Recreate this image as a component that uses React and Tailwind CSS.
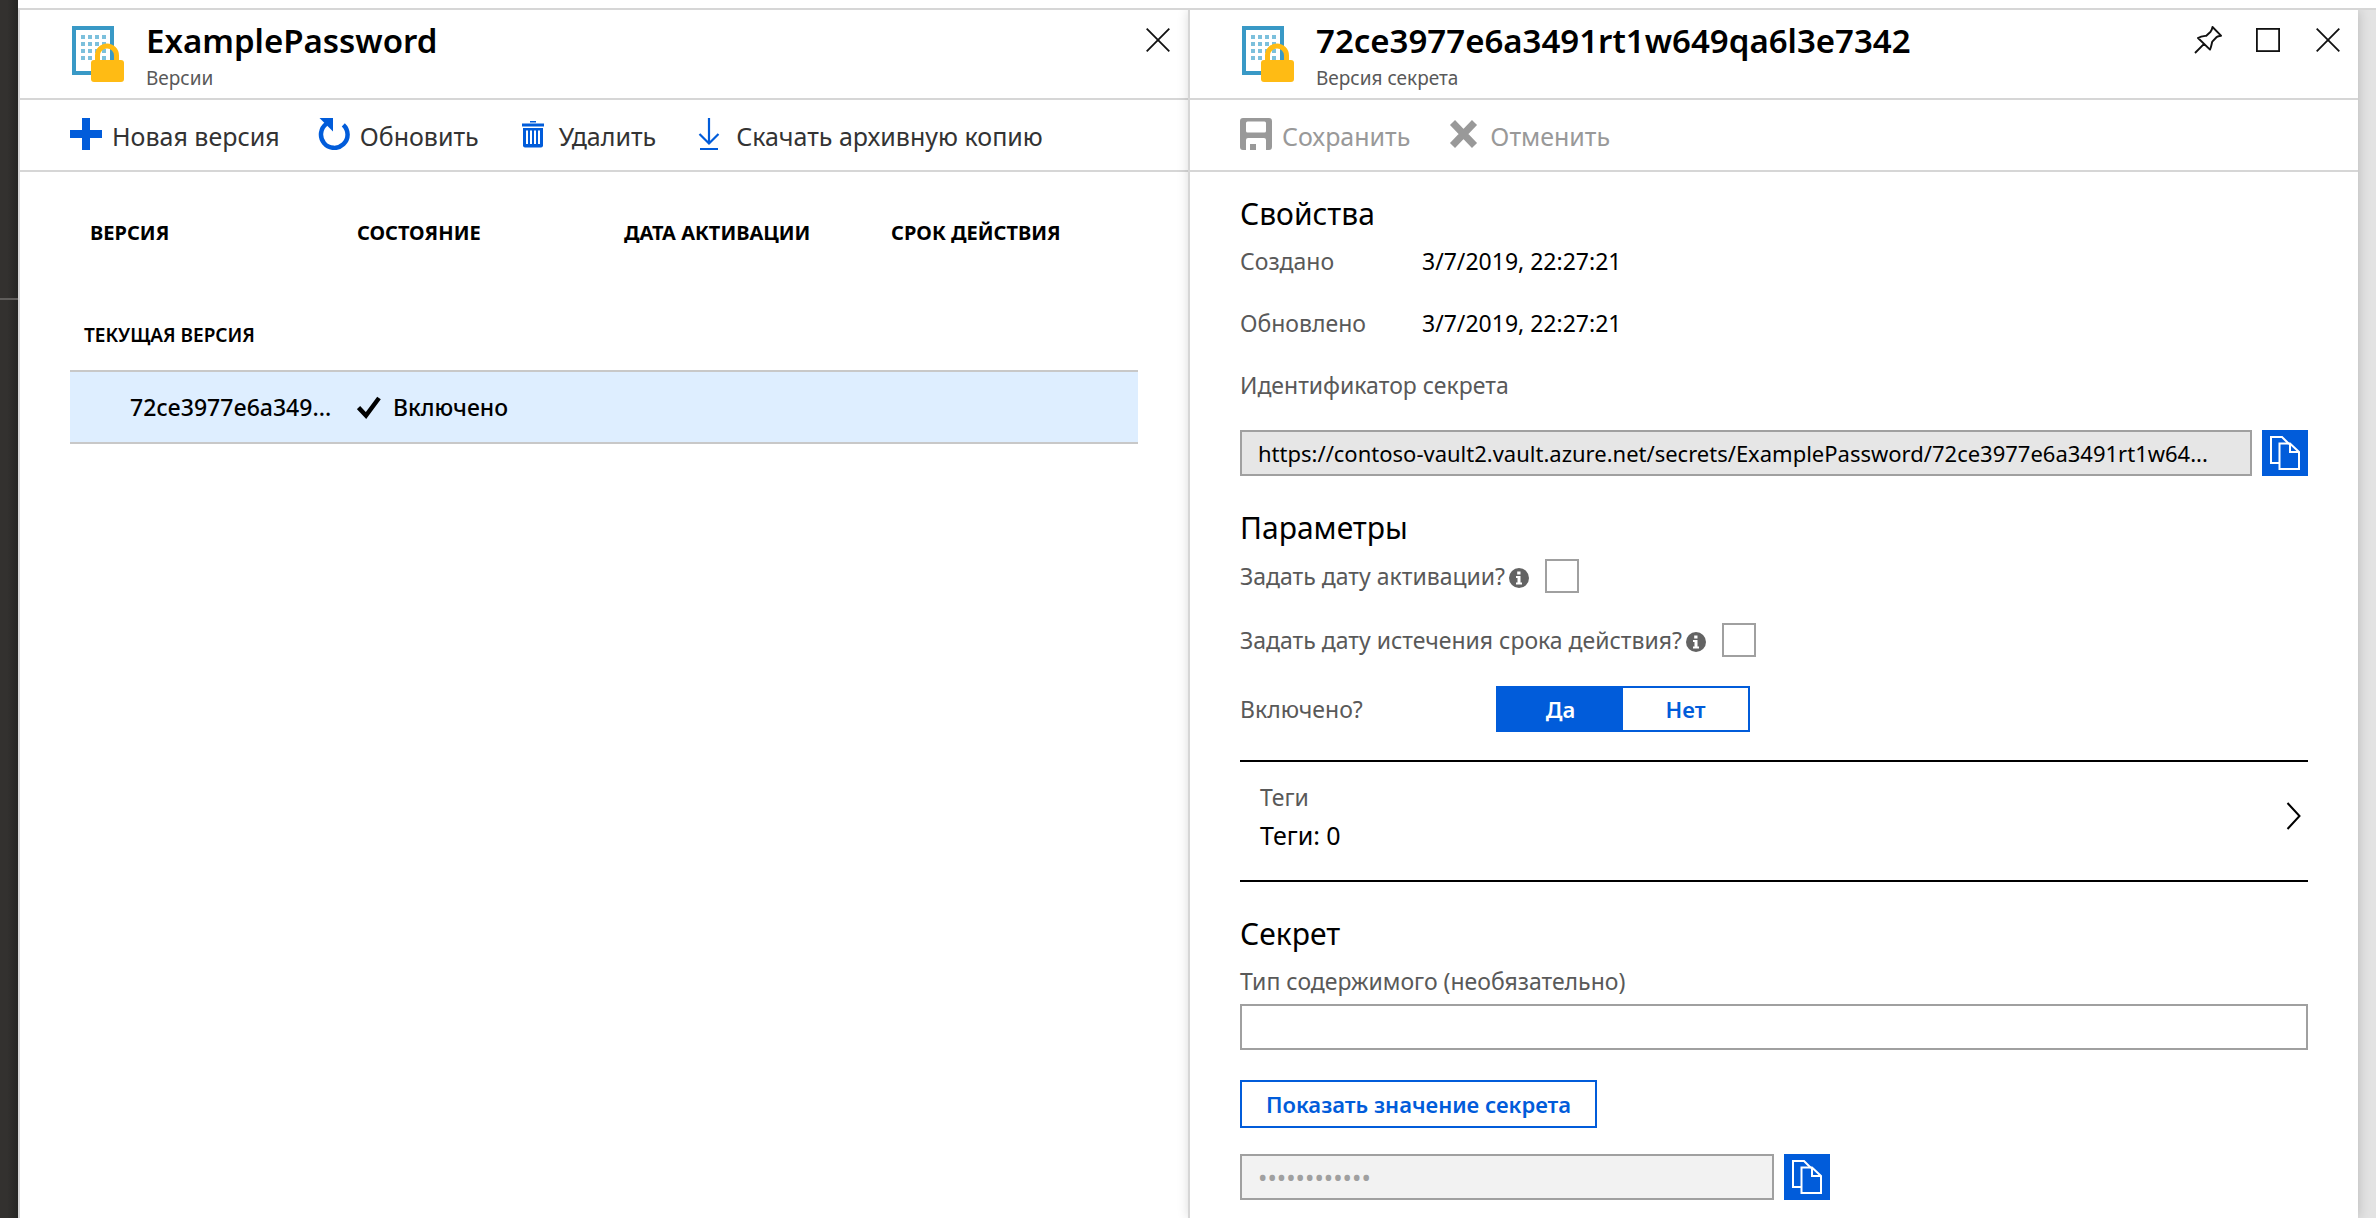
function SecretIcon() {
  const dots = [];
  for (let r = 0; r < 4; r++) {
    for (let c = 0; c < 4; c++) {
      dots.push(<rect key={r + "-" + c} x={11 + c * 7} y={11 + r * 7} width="4" height="4" fill="#7cc0dc" />);
    }
  }
  return (
    <svg viewBox="0 0 56 60" className="mt-1.5 h-[60px] w-14 shrink-0" aria-hidden="true">
      <rect x="4" y="4" width="38" height="45" fill="#fff" stroke="#3999c6" strokeWidth="4" />
      {dots}
      <path d="M27.5 38V31.5a9.5 9.500 0 0 1 19 0V38" fill="none" stroke="#ffbb14" strokeWidth="5" />
      <rect x="21" y="36" width="33" height="22" rx="3" fill="#ffbb14" />
    </svg>
  );
}

function PlusIcon() {
  return (
    <svg viewBox="0 0 32 32" className="size-8 shrink-0" aria-hidden="true">
      <path d="M12 0h8v12h12v8H20v12h-8V20H0v-8h12z" fill="#015cda" />
    </svg>
  );
}

function RefreshIcon() {
  return (
    <svg viewBox="0 0 32 32" className="size-8 shrink-0" aria-hidden="true">
      <path d="M25.300 6.800A13.300 13.300 0 1 1 8.500 5.800" fill="none" stroke="#015cda" strokeWidth="4.500" />
      <path d="M1.500 0H15v13.500z" fill="#015cda" />
    </svg>
  );
}

function TrashIcon() {
  return (
    <svg viewBox="0 0 32 32" className="size-8 shrink-0" aria-hidden="true">
      <path d="M13 3h6v1.500h-6zM5 5.500h22v3H5z" fill="#015cda" />
      <path d="M6 10h20v17.500a2 2 0 0 1-2 2H8a2 2 0 0 1-2-2z" fill="#015cda" />
      <path d="M10 12.500V26M14 12.500V26M18 12.500V26M22 12.500V26" stroke="#fff" strokeWidth="2" />
    </svg>
  );
}

function DownloadIcon() {
  return (
    <svg viewBox="0 0 32 32" className="size-8 shrink-0" aria-hidden="true">
      <path d="M15 0v25M5.500 16l9.500 9.500L24.500 16M6 31h18" fill="none" stroke="#015cda" strokeWidth="2.200" />
    </svg>
  );
}

function SaveIcon() {
  return (
    <svg viewBox="0 0 32 32" className="size-8 shrink-0" aria-hidden="true">
      <path
        fillRule="evenodd"
        fill="#999"
        d="M3 0h26a3 3 0 0 1 3 3v26a3 3 0 0 1-3 3h-3V22a2 2 0 0 0-2-2H8a2 2 0 0 0-2 2v10H3a3 3 0 0 1-3-3V3a3 3 0 0 1 3-3zM7.500 3.500a1.500 1.500 0 0 0-1.500 1.500v8A1.500 1.500 0 0 0 7.500 14.500h17a1.500 1.500 0 0 0 1.500-1.500V5a1.500 1.500 0 0 0-1.500-1.500zM10 26h6v6h-6z"
      />
    </svg>
  );
}

function CancelIcon() {
  return (
    <svg viewBox="0 0 32 32" className="size-8 shrink-0" aria-hidden="true">
      <path d="M4.500 4.500l22 23M26.500 4.500l-22 23" stroke="#999" strokeWidth="7" />
    </svg>
  );
}

function CloseIcon() {
  return (
    <svg viewBox="0 0 24 24" className="size-6" aria-hidden="true">
      <path d="M.7.7l22.600 22.600M23.300.7L.7 23.300" stroke="#111" strokeWidth="1.800" />
    </svg>
  );
}

function SquareIcon() {
  return (
    <svg viewBox="0 0 24 24" className="size-6" aria-hidden="true">
      <rect x=".9" y=".9" width="22.200" height="22.200" fill="none" stroke="#111" strokeWidth="1.800" />
    </svg>
  );
}

function PinIcon() {
  return (
    <svg viewBox="0 0 28 28" className="size-7" aria-hidden="true">
      <path
        d="M1 27l9.300-9.300M18.500 1l8.500 8.700c-2.300.2-3.500.6-4.300 1.300l-4.400 4.600c-.6 1.300-.6 4-2.300 8L4 12c3.300-2 6-2 8.300-2.300l4.300-4c.9-1 1.500-2.500 1.900-4.700z"
        fill="none"
        stroke="#111"
        strokeWidth="1.900"
        strokeLinejoin="round"
      />
    </svg>
  );
}

function CheckIcon() {
  return (
    <svg viewBox="0 0 24 24" className="size-6 shrink-0" aria-hidden="true">
      <path d="M1.500 12.500l7.500 8L22 3" fill="none" stroke="#000" strokeWidth="4.500" />
    </svg>
  );
}

function InfoIcon() {
  return (
    <svg viewBox="0 0 20 20" className="mt-1 size-5 shrink-0" aria-hidden="true">
      <circle cx="10" cy="10" r="10" fill="#636363" />
      <path d="M8.200 3.500h3.300v3H8.200zM7 8h4.500v6.500H13v2H7v-2h1.500V10H7z" fill="#fff" />
    </svg>
  );
}

function CopyButton({ label }) {
  return (
    <button type="button" aria-label={label} className="flex size-[46px] shrink-0 items-center justify-center bg-[#015cda]">
      <svg viewBox="0 0 30 34" className="h-[34px] w-[30px]" fill="none" stroke="#fff" strokeWidth="2" aria-hidden="true">
        <path d="M9 27H1V1h11l7 7" />
        <path d="M9.500 7.500H20L29 16v17H9.500z" />
        <path d="M20 7.500V16h9" />
      </svg>
    </button>
  );
}

function Header({ title, subtitle, children }) {
  return (
    <header className="flex h-[90px] items-start gap-5 border-b-2 border-[#d6d6d6] pt-2 pr-[18px] pl-[50px]">
      <SecretIcon />
      <div className="min-w-0 flex-1">
        <h1 className="truncate text-[33px] leading-[46px] font-semibold">{title}</h1>
        <p className="text-[19px] leading-7 text-[#595959]">{subtitle}</p>
      </div>
      <div className="flex h-11 items-center gap-9">{children}</div>
    </header>
  );
}

function Tool({ icon, children, disabled }) {
  return (
    <button
      type="button"
      disabled={disabled}
      className="flex items-center gap-2.5 text-[25px] leading-9 text-[#333] disabled:text-[#999]"
    >
      {icon}
      <span className="mt-1">{children}</span>
    </button>
  );
}

function Toolbar({ children }) {
  return (
    <div role="toolbar" className="flex h-[72px] items-center gap-[38px] border-b-2 border-[#d6d6d6] px-[50px] pb-0.5">
      {children}
    </div>
  );
}

function DateOption({ id, children }) {
  return (
    <div className="flex h-16 items-center">
      <label htmlFor={id} className="text-[#595959]">{children}</label>
      <span className="ml-1 flex"><InfoIcon /></span>
      <input id={id} type="checkbox" className="ml-4 size-[34px] appearance-none border-2 border-[#a0a0a0] bg-white" />
    </div>
  );
}

function VersionsPanel() {
  const headings = ["ВЕРСИЯ", "СОСТОЯНИЕ", "ДАТА АКТИВАЦИИ", "СРОК ДЕЙСТВИЯ"];
  const cell = "h-[74px] border-y-2 border-[#c8c8c8] bg-[#deeeff]";
  return (
    <section className="min-w-0 flex-1 bg-white">
      <Header title="ExamplePassword" subtitle="Версии">
        <button type="button" aria-label="Закрыть"><CloseIcon /></button>
      </Header>
      <Toolbar>
        <Tool icon={<PlusIcon />}>Новая версия</Tool>
        <Tool icon={<RefreshIcon />}>Обновить</Tool>
        <Tool icon={<TrashIcon />}>Удалить</Tool>
        <Tool icon={<DownloadIcon />}>Скачать архивную копию</Tool>
      </Toolbar>
      <div className="px-[50px]">
        <table className="w-full table-fixed border-separate border-spacing-0 text-left">
          <thead>
            <tr>
              {headings.map((h) => (
                <th key={h} scope="col" className="h-[122px] pl-5 text-[20px] font-bold whitespace-nowrap">{h}</th>
              ))}
            </tr>
          </thead>
          <tbody>
            <tr>
              <th colSpan={4} scope="colgroup" className="h-[76px] pt-1.5 pl-3.5 text-[19px] font-semibold">ТЕКУЩАЯ ВЕРСИЯ</th>
            </tr>
            <tr className="font-medium">
              <td className={cell + " pl-[60px] whitespace-nowrap"}>72ce3977e6a349...</td>
              <td className={cell + " pl-5"}>
                <span className="flex items-center gap-3"><CheckIcon />Включено</span>
              </td>
              <td className={cell} />
              <td className={cell} />
            </tr>
          </tbody>
        </table>
      </div>
    </section>
  );
}

function SecretPanel() {
  return (
    <section className="relative min-w-0 flex-1 bg-white shadow-[0_0_12px_rgba(0,0,0,0.2)]">
      <Header title="72ce3977e6a3491rt1w649qa6l3e7342" subtitle="Версия секрета">
        <button type="button" aria-label="Закрепить" className="-mr-0.5"><PinIcon /></button>
        <button type="button" aria-label="Развернуть"><SquareIcon /></button>
        <button type="button" aria-label="Закрыть"><CloseIcon /></button>
      </Header>
      <Toolbar>
        <Tool icon={<SaveIcon />} disabled>Сохранить</Tool>
        <Tool icon={<CancelIcon />} disabled>Отменить</Tool>
      </Toolbar>
      <div className="px-[50px] pt-[26px]">
        <h2 className="text-[30px] leading-8">Свойства</h2>
        <dl className="grid grid-cols-[182px_1fr]">
          <dt className="leading-[62px] text-[#595959]">Создано</dt>
          <dd className="leading-[62px]">3/7/2019, 22:27:21</dd>
          <dt className="leading-[62px] text-[#595959]">Обновлено</dt>
          <dd className="leading-[62px]">3/7/2019, 22:27:21</dd>
        </dl>
        <label htmlFor="secret-id" className="block leading-[62px] text-[#595959]">Идентификатор секрета</label>
        <div className="mt-3.5 flex gap-2.5">
          <input
            id="secret-id"
            type="text"
            readOnly
            defaultValue="https://contoso-vault2.vault.azure.net/secrets/ExamplePassword/72ce3977e6a3491rt1w64..."
            className="h-[46px] min-w-0 flex-1 border-2 border-[#a0a0a0] bg-[#e6e6e6] px-4 text-[22px] text-ellipsis"
          />
          <CopyButton label="Копировать идентификатор" />
        </div>

        <h2 className="mt-9 text-[30px] leading-8">Параметры</h2>
        <DateOption id="activation">Задать дату активации?</DateOption>
        <DateOption id="expiration">Задать дату истечения срока действия?</DateOption>
        <div className="mt-3.5 flex items-center">
          <span id="enabled-label" className="w-64 text-[#595959]">Включено?</span>
          <div role="group" aria-labelledby="enabled-label" className="grid h-[46px] w-[254px] grid-cols-2 border-2 border-[#015cda] text-[22px] font-semibold">
            <button type="button" aria-pressed="true" className="bg-[#015cda] text-white">Да</button>
            <button type="button" aria-pressed="false" className="bg-white text-[#015cda]">Нет</button>
          </div>
        </div>

        <button type="button" className="mt-7 flex w-full items-center justify-between border-y-2 border-black pt-4 pr-1.5 pb-[26px] pl-5 text-left leading-[38px]">
          <span>
            <span className="block text-[#595959]">Теги</span>
            <span className="block text-[25px]">Теги: 0</span>
          </span>
          <svg viewBox="0 0 16 28" className="h-7 w-4" aria-hidden="true">
            <path d="M1.500 1l12 13-12 13" fill="none" stroke="#000" strokeWidth="2" />
          </svg>
        </button>

        <h2 className="mt-9 text-[30px] leading-8">Секрет</h2>
        <label htmlFor="content-type" className="mt-3.5 block leading-[34px] text-[#595959]">Тип содержимого (необязательно)</label>
        <input id="content-type" type="text" className="mt-1.5 block h-[46px] w-full border-2 border-[#a0a0a0] bg-white px-4" />
        <button type="button" className="mt-[30px] block h-12 border-2 border-[#015cda] px-6 text-[22px] font-semibold text-[#015cda]">
          Показать значение секрета
        </button>
        <div className="mt-[26px] flex gap-2.5">
          <input
            type="password"
            aria-label="Значение секрета"
            disabled
            defaultValue="************"
            className="h-[46px] w-1/2 border-2 border-[#a0a0a0] bg-[#f2f2f2] px-4 text-[25px] text-[#a0a0a0]"
          />
          <CopyButton label="Копировать значение секрета" />
        </div>
      </div>
    </section>
  );
}

export default function App() {
  return (
    <div className="flex min-h-screen bg-white font-['Noto_Sans','Open_Sans',sans-serif] text-[23px] leading-8 text-black">
      <div className="w-[18px] shrink-0 bg-linear-to-r from-[#33312f] from-40% to-[#262624]">
        <div className="h-[300px] border-b-2 border-[#605e5c]" />
      </div>
      <div className="flex min-w-0 flex-1 flex-col pt-2">
        <div className="flex flex-1 overflow-hidden border-t-2 border-[#d6d6d6]">
          <div className="w-0.5 shrink-0 bg-[#d6d6d6]" />
          <VersionsPanel />
          <div className="relative z-10 w-0.5 shrink-0 bg-[#d6d6d6]" />
          <SecretPanel />
          <div className="w-[18px] shrink-0 bg-[#e3e3e3]" />
        </div>
      </div>
    </div>
  );
}
